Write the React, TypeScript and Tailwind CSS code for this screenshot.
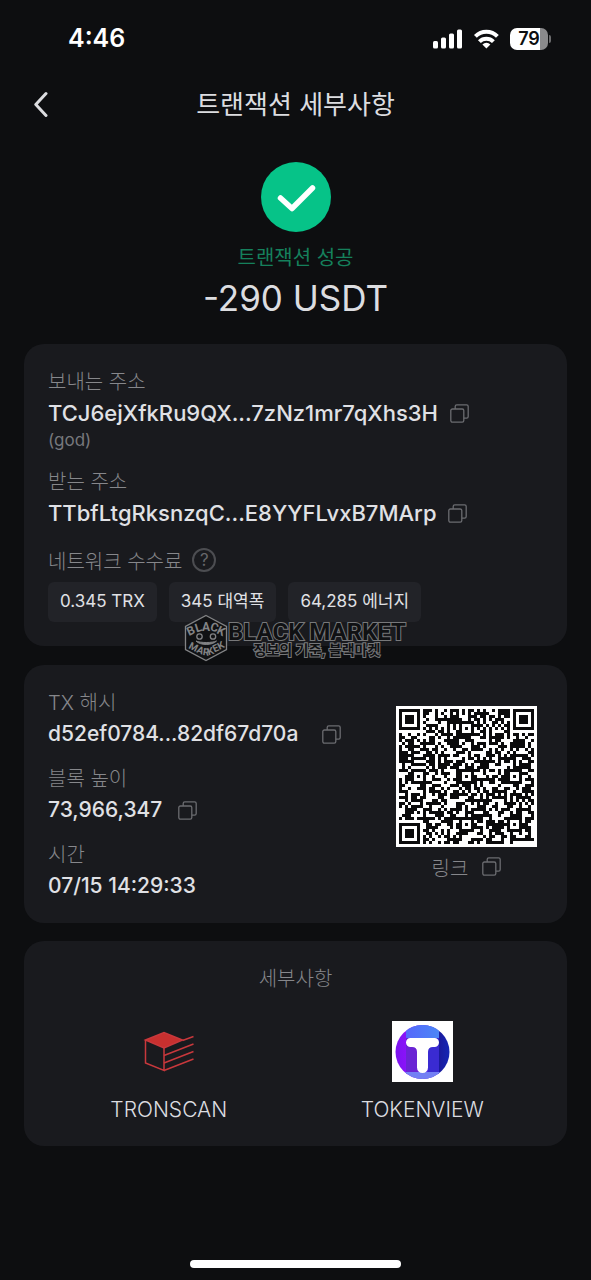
import type { ReactNode } from 'react'
import clsx from 'clsx'

const QR_SIZE = 45
const QR_ALIGN = [
  [6, 22],
  [22, 6],
  [22, 22],
  [22, 38],
  [38, 22],
  [38, 38],
]

function isDark(x: number, y: number, noise: number) {
  const far = QR_SIZE - 7
  for (const [fx, fy] of [[0, 0], [far, 0], [0, far]]) {
    const d = Math.max(Math.abs(x - fx - 3), Math.abs(y - fy - 3))
    if (d <= 4) return d === 3 || d <= 1
  }
  for (const [ax, ay] of QR_ALIGN) {
    const d = Math.max(Math.abs(x - ax), Math.abs(y - ay))
    if (d <= 2) return d !== 1
  }
  if (x === 6 || y === 6) return (x + y) % 2 === 0
  return noise > 0.47
}

function buildQrPath() {
  let seed = 73966347
  let path = ''
  for (let y = 0; y < QR_SIZE; y++) {
    for (let x = 0; x < QR_SIZE; x++) {
      seed = (Math.imul(seed, 1664525) + 1013904223) >>> 0
      if (isDark(x, y, seed / 4294967296)) path += `M${x} ${y}h1v1h-1z`
    }
  }
  return path
}

const qrPath = buildQrPath()

function CopyButton({ label, className }: { label: string; className?: string }) {
  return (
    <button type="button" aria-label={label} className={clsx('shrink-0 text-[#6b6c70]', className)}>
      <svg width="19" height="19" viewBox="0 0 19 19" fill="none" stroke="currentColor" strokeWidth="1.3">
        <rect x="0.8" y="5" width="13" height="13.2" rx="1.6" />
        <path d="M5.2 5V2.4C5.2 1.5 5.9.8 6.8.8h9.8c.9 0 1.6.7 1.6 1.6v10.2c0 .9-.7 1.6-1.6 1.6h-2.8" />
      </svg>
    </button>
  )
}

function Card({ className, children }: { className?: string; children: ReactNode }) {
  return <section className={clsx('rounded-[20px] bg-[#191a1e]', className)}>{children}</section>
}

function Label({ children }: { children: ReactNode }) {
  return <p className="pt-1 text-xl/7 font-light text-[#86878b]">{children}</p>
}

function Value({ className, children }: { className?: string; children: ReactNode }) {
  return <div className={clsx('flex h-[34px] items-center font-[450] text-[#e0e1e5]', className)}>{children}</div>
}

function StatusBar() {
  return (
    <div className="flex h-[78px] items-center justify-between pr-10 pl-[68px]">
      <span className="text-[25px] font-semibold text-white">4:46</span>
      <div className="flex items-center gap-2.5">
        <svg width="30" height="20" viewBox="0 0 30 20" fill="#fff">
          <rect x="0" y="12" width="5" height="7.5" rx="1.5" />
          <rect x="8" y="8.5" width="5" height="11" rx="1.5" />
          <rect x="16" y="4.5" width="5" height="15" rx="1.5" />
          <rect x="24" y="0.5" width="5" height="19" rx="1.5" />
        </svg>
        <svg width="27" height="20" viewBox="0 0 27 20" fill="none" stroke="#fff" strokeWidth="4">
          <path d="M2.4 7.4a15.6 15.6 0 0 1 22 0" />
          <path d="M6.4 12.6a9.9 9.9 0 0 1 14 0" />
          <path d="M13.4 19.6l-4-4.2a5.8 5.8 0 0 1 8 0z" fill="#fff" stroke="none" />
        </svg>
        <div className="flex items-center gap-px">
          <div className="flex h-[22px] w-[38px] items-center justify-center rounded-[7px] bg-linear-to-r from-white from-79% to-[#8a8a8c] to-79% text-lg font-semibold text-[#0d0e10]">
            79
          </div>
          <span className="h-2 w-0.5 rounded-r-full bg-[#6c6c6e]" />
        </div>
      </div>
    </div>
  )
}

function Watermark() {
  return (
    <div className="pointer-events-none absolute -bottom-4 left-40 flex items-center">
      <svg width="44" height="48" viewBox="0 0 44 48" fill="none" stroke="#828385">
        <path d="M22 1.5 42.5 12.5v23L22 46.5 1.5 35.5v-23z" fill="#101113" strokeWidth="1.3" />
        <g fill="#828385" stroke="none" fontWeight="700" className="font-['Roboto',sans-serif]">
          <text fontSize="12" x="5 12.500 18 25.500 32" y="22 18.500 16.500 16 19" rotate="-25 -18 0 18 26">
            BLACK
          </text>
          <text fontSize="10" x="4 12 18.500 24.500 30.500 35.500" y="34 38 41 41.500 38.500 36" rotate="27 24 8 -18 -25 -27">
            MARKEK
          </text>
        </g>
        <circle cx="15.5" cy="22.5" r="2.7" strokeWidth="1.3" />
        <circle cx="29" cy="22.5" r="2.7" strokeWidth="1.3" />
        <path d="M12 27c4 4.6 16.500 4.6 20.500 0-4 2-16.500 2-20.500 0z" fill="#828385" />
      </svg>
      <div className="flex flex-col items-center pt-1.5 text-[#101113] [paint-order:stroke_fill]">
        <span className="font-['Roboto',sans-serif] text-2xl/[18px] font-bold [-webkit-text-stroke:2px_#77787a]">
          BLACK MARKET
        </span>
        <span className="text-sm/[18px] font-bold [-webkit-text-stroke:2px_#77787a]">정보의 기준, 블랙마켓</span>
      </div>
    </div>
  )
}

function TronscanIcon() {
  return (
    <svg width="61" height="61" viewBox="0 0 61 61" fill="none" stroke="#c8383c" strokeWidth="1.5">
      <path d="M7.5 19 26 11.5 44.5 19 26 27z" fill="#c8302f" />
      <path d="M44.5 19.5 55.5 15.5M7.5 19v23L26 49.5V27" />
      <path d="M26 34.5 55.5 23M26 42 55.5 30.5M26 49.5 55.5 38" />
    </svg>
  )
}

function TokenviewIcon() {
  return (
    <svg width="61" height="61" viewBox="0 0 61 61">
      <defs>
        <linearGradient id="tv-left" x1="0" x2="1">
          <stop offset="0" stopColor="#7a14ee" />
          <stop offset="0.25" stopColor="#8a12fa" />
          <stop offset="1" stopColor="#3a35d8" />
        </linearGradient>
        <linearGradient id="tv-top" x1="0" x2="1">
          <stop offset="0" stopColor="#5568fb" />
          <stop offset="1" stopColor="#4a86f6" />
        </linearGradient>
        <linearGradient id="tv-right" x1="0" x2="1">
          <stop offset="0" stopColor="#1a1a9c" />
          <stop offset="1" stopColor="#1428b8" />
        </linearGradient>
        <clipPath id="tv-clip">
          <circle cx="30.5" cy="31" r="27" />
        </clipPath>
      </defs>
      <rect width="61" height="61" fill="#fff" />
      <g clipPath="url(#tv-clip)">
        <rect x="3" y="3" width="44" height="56" fill="url(#tv-left)" />
        <rect x="14" y="17" width="12" height="36" fill="#6a24d4" />
        <rect x="36" y="17" width="12" height="36" fill="#3a2bd2" />
        <rect x="47" y="3" width="12" height="56" fill="url(#tv-right)" />
        <rect x="14" y="3" width="33" height="14" fill="url(#tv-top)" />
        <rect x="10" y="51" width="42" height="10" fill="#7380f4" />
      </g>
      <path
        d="M18.5 17h24a4.5 4.5 0 0 1 0 9H41q-5 0-5 5v15.5a5.5 5.5 0 0 1-11 0V31q0-5-5-5h-1.5a4.5 4.5 0 0 1 0-9z"
        fill="#fff"
      />
    </svg>
  )
}

const fees = ['0.345 TRX', '345 대역폭', '64,285 에너지']

const explorers = [
  { name: 'TRONSCAN', icon: <TronscanIcon /> },
  { name: 'TOKENVIEW', icon: <TokenviewIcon /> },
]

export default function App() {
  return (
    <div className="flex min-h-screen flex-col bg-[#0d0e10] font-['Inter','Noto_Sans_CJK_KR',sans-serif]">
      <StatusBar />

      <header className="grid h-[52px] grid-cols-[48px_1fr_48px] items-center px-6">
        <button type="button" aria-label="뒤로" className="pl-2.5 text-[#dcdde0]">
          <svg width="14" height="26" viewBox="0 0 14 26" fill="none" stroke="currentColor" strokeWidth="3">
            <path d="M12 2.5 1.8 13.5 12 24.5" strokeLinecap="round" strokeLinejoin="round" />
          </svg>
        </button>
        <h1 className="text-center text-[26px] text-[#dcdde0]">트랜잭션 세부사항</h1>
      </header>

      <main className="flex flex-col px-6">
        <div className="mt-8 flex flex-col items-center">
          <svg width="70" height="70" viewBox="0 0 70 70" fill="none">
            <circle cx="35" cy="35" r="35" fill="#06c388" />
            <path d="M19.5 36 31 46.5 51.5 26" stroke="#fff" strokeWidth="5.5" strokeLinecap="round" strokeLinejoin="round" />
          </svg>
          <p className="mt-2 pt-1 text-xl/7 text-[#15805c]">트랜잭션 성공</p>
          <p className="mt-1 text-[35px]/11 text-[#dcdde0]">-290 USDT</p>
        </div>

        <Card className="relative mt-6 flex flex-col gap-3.5 px-6 pt-5 pb-6">
          <div>
            <Label>보내는 주소</Label>
            <Value className="text-[22px]">
              TCJ6ejXfkRu9QX...7zNz1mr7qXhs3H
              <CopyButton label="보내는 주소 복사" className="ml-3" />
            </Value>
            <p className="text-[17px]/5 text-[#77787c]">(god)</p>
          </div>
          <div>
            <Label>받는 주소</Label>
            <Value className="text-[22px]">
              TTbfLtgRksnzqC...E8YYFLvxB7MArp
              <CopyButton label="받는 주소 복사" className="ml-3" />
            </Value>
          </div>
          <div>
            <div className="flex items-center gap-2.5">
              <Label>네트워크 수수료</Label>
              <button
                type="button"
                aria-label="수수료 도움말"
                className="flex size-6 items-center justify-center rounded-full border-2 border-[#4c4d51] text-[17px]/5 text-[#66676b]"
              >
                ?
              </button>
            </div>
            <ul className="mt-1.5 flex gap-3">
              {fees.map((fee) => (
                <li key={fee} className="flex h-10 items-center rounded-md bg-[#222328] px-3 text-[17px] text-[#e0e1e5]">
                  {fee}
                </li>
              ))}
            </ul>
          </div>
          <Watermark />
        </Card>

        <Card className="mt-[19px] flex justify-between py-5 pr-[30px] pl-6">
          <div className="flex flex-col gap-2.5">
            <div>
              <Label>TX 해시</Label>
              <Value className="text-[21px]">
                d52ef0784...82df67d70a
                <CopyButton label="TX 해시 복사" className="ml-6" />
              </Value>
            </div>
            <div>
              <Label>블록 높이</Label>
              <Value className="text-[21px]">
                73,966,347
                <CopyButton label="블록 높이 복사" className="ml-4" />
              </Value>
            </div>
            <div>
              <Label>시간</Label>
              <Value className="text-[21px]">07/15 14:29:33</Value>
            </div>
          </div>
          <div className="flex flex-col items-center gap-1 self-center">
            <div className="bg-white p-[3px]">
              <svg width="135" height="135" viewBox="0 0 45 45" shapeRendering="crispEdges" role="img" aria-label="QR">
                <path d={qrPath} fill="#0b0b0c" />
              </svg>
            </div>
            <div className="flex items-center gap-3.5">
              <Label>링크</Label>
              <CopyButton label="링크 복사" />
            </div>
          </div>
        </Card>

        <Card className="mt-[18px] px-4.5 py-5 text-center">
          <Label>세부사항</Label>
          <div className="mt-7 grid grid-cols-2">
            {explorers.map(({ name, icon }) => (
              <a key={name} href="#" className="flex flex-col items-center gap-3 text-[21px]/8 font-light text-[#dcdde0]">
                {icon}
                {name}
              </a>
            ))}
          </div>
        </Card>
      </main>

      <div className="mt-auto flex justify-center pt-6 pb-3">
        <div className="h-2 w-[211px] rounded-full bg-white" />
      </div>
    </div>
  )
}
